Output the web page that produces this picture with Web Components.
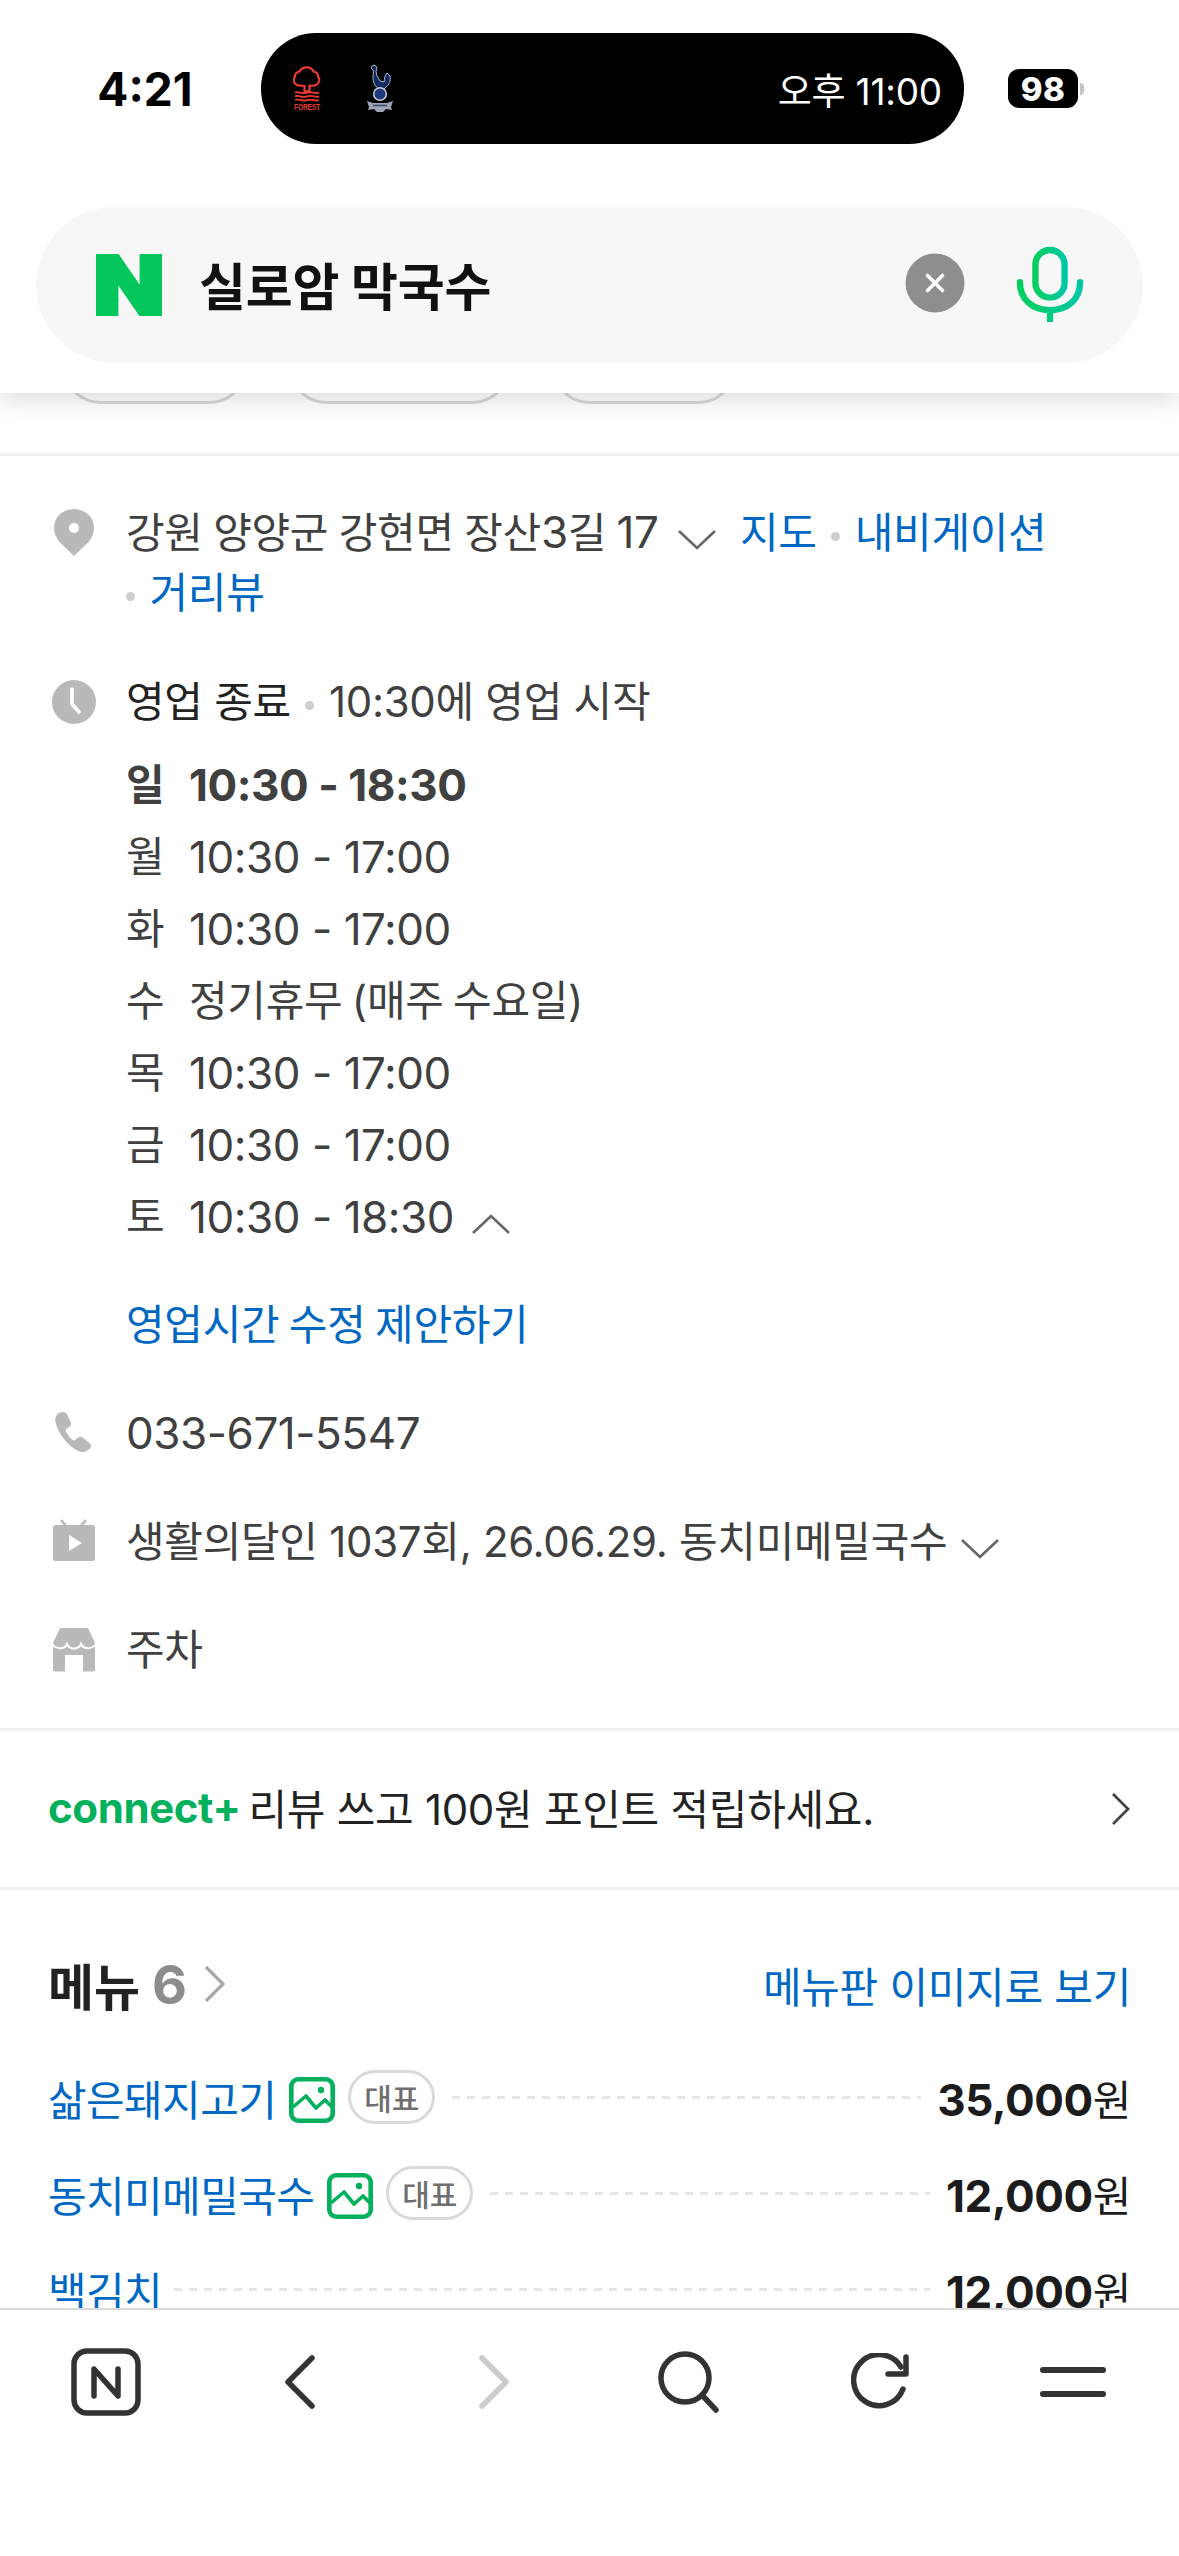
<!DOCTYPE html>
<html lang="ko"><head><meta charset="utf-8"><title>실로암 막국수</title>
<style>
html,body{margin:0;padding:0;background:#fff}
body{width:1179px;height:2556px;overflow:hidden;font-family:"Inter","Noto Sans CJK KR",sans-serif;color:#404040;font-size:42px}
.num{font-size:44px;letter-spacing:-.45px}
.nb{white-space:nowrap}
.ws{word-spacing:-2px}
.ws1{word-spacing:-1px}
</style></head><body>
<app-page>
  <status-bar slot="top"></status-bar>
  <search-bar slot="top" query="실로암 막국수"></search-bar>
  <chip-row></chip-row>
  <hr-line></hr-line>
  <info-list>
    <info-row icon="pin"><span class="ws1">강원 양양군 강현면 장산<span class="num">3</span>길 <span class="num">17</span></span> <ui-chev dir="down" style="margin-left:7px"></ui-chev>&nbsp; <a-link>지도</a-link> <sep-dot></sep-dot> <a-link>내비게이션</a-link> <span class="nb"><sep-dot style="margin-left:0"></sep-dot> <a-link>거리뷰</a-link></span></info-row>
    <info-row icon="clock" style="margin-top:1px">
      <span style="color:#222">영업 종료</span> <sep-dot></sep-dot> 10:30에 영업 시작
      <hours-list slot="after">
        <hour-row day="일" strong><span class="num">10:30 - 18:30</span></hour-row>
        <hour-row day="월"><span class="num">10:30 - 17:00</span></hour-row>
        <hour-row day="화"><span class="num">10:30 - 17:00</span></hour-row>
        <hour-row day="수"><span class="ws">정기휴무 (매주 수요일)</span></hour-row>
        <hour-row day="목"><span class="num">10:30 - 17:00</span></hour-row>
        <hour-row day="금"><span class="num">10:30 - 17:00</span></hour-row>
        <hour-row day="토"><span class="num">10:30 - 18:30</span><ui-chev dir="up" style="margin-left:17px"></ui-chev></hour-row>
      </hours-list>
      <a-link slot="link" class="ws">영업시간 수정 제안하기</a-link>
    </info-row>
    <info-row icon="phone"><span class="num">033-671-5547</span></info-row>
    <info-row icon="tv">생활의달인 1037회, 26.06.29. 동치미메밀국수<ui-chev dir="down" style="margin-left:13px"></ui-chev></info-row>
    <info-row icon="store">주차</info-row>
  </info-list>
  <hr-line></hr-line>
  <connect-banner></connect-banner>
  <hr-line></hr-line>
  <menu-section>
    <menu-row name="삶은돼지고기" price="35,000" photo tag></menu-row>
    <menu-row name="동치미메밀국수" price="12,000" photo tag></menu-row>
    <menu-row name="백김치" price="12,000"></menu-row>
  </menu-section>
  <bottom-nav slot="bottom"></bottom-nav>
</app-page>
<script>
const FONT='"Inter","Noto Sans CJK KR",sans-serif';
customElements.define('app-page',class extends HTMLElement{constructor(){super();this.attachShadow({mode:'open'}).innerHTML=`<style>
:host{display:flex;flex-direction:column;width:1179px;height:2556px;background:#fff;overflow:hidden}
header{flex:none;height:393px;background:#fff;position:relative;z-index:2;box-shadow:0 8px 22px rgba(0,0,0,.13)}
main{flex:1;min-height:0;overflow:hidden}
footer{flex:none}
</style><header><slot name="top"></slot></header><main><slot></slot></main><footer><slot name="bottom"></slot></footer>`}});

customElements.define('status-bar',class extends HTMLElement{constructor(){super();this.attachShadow({mode:'open'}).innerHTML=`<style>
:host{display:flex;align-items:center;height:111px;padding-top:33px;font-family:${FONT}}
.time{width:230px;margin-left:30px;margin-right:1px;text-align:center;font-size:46px;font-weight:700;color:#000;flex:none;line-height:60px}
.isl{width:703px;height:111px;background:#000;border-radius:55px;flex:none;display:flex;align-items:center;padding:0 22px 0 32px;box-sizing:border-box;color:#fff;font-size:37px;letter-spacing:-.2px}
.isl svg{display:block}
.t{margin-left:auto;font-weight:400;white-space:nowrap}
.bat{margin-left:44px;width:70px;height:39px;background:#000;border-radius:11px;color:#fff;font-weight:800;font-size:33px;display:flex;align-items:center;justify-content:center;flex:none;letter-spacing:.5px}
.nub{width:4px;height:12px;background:#c4c4c4;border-radius:0 4px 4px 0;margin-left:2px}
</style>
<div class="time">4:21</div>
<div class="isl">
<svg width="28" height="46" viewBox="0 0 28 50" preserveAspectRatio="none"><path d="M14 1.500c3.500 0 5.500 2 6.500 4.500 3 .5 4.500 3 4.500 5.500 2 2.500 1.500 6.500-1 8.500-2 1.500-4.500 1.500-7 1.500H16.500v6h-5v-6H10c-2.500 0-5 0-7-1.500-2.500-2-3-6-1-8.500 0-2.500 1.500-5 4.500-5.500 1-2.500 3.500-4.500 7.500-4.500z" fill="none" stroke="#ee3b2f" stroke-width="2.200"/><path d="M2 29c4-2 6 2 12 0s8 2 12 0M2 33c4-2 6 2 12 0s8 2 12 0M2 37c4-2 6 2 12 0s8 2 12 0" fill="none" stroke="#ee3b2f" stroke-width="2"/><text x="14" y="47.500" font-size="9" font-weight="700" text-anchor="middle" fill="#ee3b2f" font-family="Liberation Sans" textLength="26" lengthAdjust="spacingAndGlyphs">FOREST</text></svg>
<svg width="26" height="49" viewBox="0 0 26 49" style="margin-left:46px"><path d="M6 1l3 1 1 3-1 2 1 5 3 5 4 1 1-6 2-3 3 3c1 5-1 9-4 11l-3 3-1 0v2h-3v-3c-4-2-6-7-6-12 0-3 1-5 0-7L4 4z" fill="#10295e" stroke="#aab2c6" stroke-width="1"/><circle cx="13" cy="30" r="6.300" fill="#1c3b7c" stroke="#c8cfdd" stroke-width="1.500"/><path d="M0 37l6 2h14l6-2-2 6 1 3-6-1-3 3h-6l-3-3-6 1 1-3z" fill="#9ea5b4"/><path d="M6 41.500h14" stroke="#38486e" stroke-width="1.600"/></svg>
<span class="t">오후 11:00</span></div>
<div class="bat">98</div><div class="nub"></div>`}});

customElements.define('search-bar',class extends HTMLElement{constructor(){super();this.attachShadow({mode:'open'}).innerHTML=`<style>
:host{display:flex;align-items:center;height:156px;margin:63px 36px 0;background:#f7f7f7;border-radius:78px;box-sizing:border-box;padding:0 59px 0 60px;font-family:${FONT}}
.q{margin-left:37px;font-size:51px;font-weight:700;color:#111;flex:1;white-space:nowrap;margin-top:-3px;letter-spacing:-.2px}
svg{display:block;flex:none}
</style>
<svg width="66" height="62" viewBox="0 0 66 62"><path d="M0 0h22.600l21 30.600V0H66v62H43.400L22.400 31.400V62H0z" fill="#03c75a"/></svg>
<span class="q">${this.getAttribute('query')}</span>
<svg width="60" height="60" viewBox="0 0 60 60" style="margin-right:51px;margin-top:-4px"><circle cx="30" cy="30" r="29.500" fill="#8e8e8e"/><path d="M22.500 22.500l15 15m0-15l-15 15" stroke="#fff" stroke-width="3.600" stroke-linecap="round"/></svg>
<svg width="68" height="76" viewBox="0 0 70 76" style="margin-top:-2px"><defs><linearGradient id="m" x1="0" y1="0" x2="1" y2="0"><stop offset="0" stop-color="#03cf5d"/><stop offset="1" stop-color="#00c8a5"/></linearGradient></defs><rect x="20" y="3" width="30" height="49" rx="15" fill="none" stroke="url(#m)" stroke-width="6.500"/><path d="M4 36c0 18 13 29 31 29s31-11 31-29M35 65v11" fill="none" stroke="url(#m)" stroke-width="6.500" stroke-linecap="round"/></svg>`}});

customElements.define('chip-row',class extends HTMLElement{constructor(){super();this.attachShadow({mode:'open'}).innerHTML=`<style>
:host{display:flex;align-items:flex-end;height:11px;overflow:hidden;padding-left:62px;gap:40px;margin-bottom:49px}
i{display:block;flex:none;height:78px;border:3px solid #d8d8d8;border-radius:39px;box-sizing:border-box}
</style><i style="width:186px"></i><i style="width:223px"></i><i style="width:186px"></i>`}});

customElements.define('hr-line',class extends HTMLElement{constructor(){super();this.attachShadow({mode:'open'}).innerHTML=`<style>:host{display:block;height:3px;background:#f0f0f0}</style>`}});

customElements.define('info-list',class extends HTMLElement{constructor(){super();this.attachShadow({mode:'open'}).innerHTML=`<style>
:host{display:flex;flex-direction:column;gap:48px;padding:46px 48px 48px 48px;line-height:60px;letter-spacing:-.3px}
</style><slot></slot>`}});

const ICONS={
pin:'<path d="M22 2C10.500 2 2 10.500 2 21c0 5.500 2.500 10 5.500 14L22 49l14.500-14c3-4 5.500-8.500 5.500-14C42 10.500 33.500 2 22 2z" fill="#b9b9b9"/><circle cx="22" cy="21" r="5" fill="#fff"/>',
clock:'<circle cx="22" cy="22" r="22" fill="#b9b9b9"/><path d="M20 9v15l7 8" fill="none" stroke="#fff" stroke-width="3.600" stroke-linecap="round" stroke-linejoin="round"/>',
phone:'<path d="M5 .5C1.500 2-.5 6 .5 10c2.500 12 13 25 24 29.500 4 1.500 8-.5 10.500-3 1.500-1.500 1.500-3.500 0-5l-7.500-6c-1.500-1-3-1-4.300 0l-2.700 2.300c-1 .8-2.200.8-3.200 0-2.500-2-5-5.300-6.300-8.300-.4-1.200 0-2.300 1-3l2.800-2.200c1.200-1 1.700-2.500 1-4L12 2c-1-2-4.500-2.600-7-1.500z" fill="#b9b9b9" transform="translate(3,2)"/>',
tv:'<path d="M9 1l7.500 8.500M34 1l-7.500 8.500" stroke="#b9b9b9" stroke-width="2.600"/><rect x="1" y="6" width="42" height="36" rx="2.500" fill="#b9b9b9"/><path d="M17 16v16l13-8z" fill="#fff"/>',
store:'<path d="M8 1h28l7 15c0 3-1 5-1 6H2c0-1-1-3-1-6z" fill="#b9b9b9"/><path d="M1 15.500c0 9 14 9 14 0 0 9 14 9 14 0 0 9 14 9 14 0v27a2 2 0 0 1-2 2H31V28H13v16.500H3a2 2 0 0 1-2-2z" fill="#b9b9b9"/><path d="M.5 17c2 5 12 6 14.500 0 2.500 6 11.500 6 14 0 2.500 6 12.500 5 14.500 0" fill="none" stroke="#fff" stroke-width="2"/>'
};
customElements.define('info-row',class extends HTMLElement{constructor(){super();const k=this.getAttribute('icon');this.attachShadow({mode:'open'}).innerHTML=`<style>
:host{display:grid;grid-template-columns:52px 1fr;column-gap:26px}
.ic{height:60px;display:flex;align-items:center;justify-content:center}
svg{display:block;flex:none;overflow:visible}
::slotted([slot=after]){display:block;margin-top:17px}
::slotted([slot=link]){display:block;margin-top:42px}
</style><div class="ic"><svg width="44" height="50" viewBox="0 0 44 ${k==='clock'?44:k==='pin'?50:46}">${ICONS[k]}</svg></div>
<div class="body"><slot></slot><slot name="after"></slot><slot name="link"></slot></div>`}});

customElements.define('a-link',class extends HTMLElement{constructor(){super();this.attachShadow({mode:'open'}).innerHTML=`<style>:host{color:#0068c3}</style><slot></slot>`}});
customElements.define('sep-dot',class extends HTMLElement{constructor(){super();this.attachShadow({mode:'open'}).innerHTML=`<style>:host{display:inline-block;width:9px;height:9px;border-radius:50%;background:#cfcfcf;vertical-align:middle;margin:0 3px}</style>`}});
customElements.define('ui-chev',class extends HTMLElement{constructor(){super();const d=this.getAttribute('dir');const p={down:'M2 2l18 17L38 2',up:'M2 19L20 2l18 17'}[d];this.attachShadow({mode:'open'}).innerHTML=`<style>:host{display:inline-block;vertical-align:-2px;margin-left:6px}svg{display:block}</style><svg width="40" height="21" viewBox="0 0 40 21"><path d="${p}" fill="none" stroke="#666" stroke-width="2.600"/></svg>`}});

customElements.define('hours-list',class extends HTMLElement{constructor(){super();this.attachShadow({mode:'open'}).innerHTML=`<style>:host{display:block}</style><slot></slot>`}});
customElements.define('hour-row',class extends HTMLElement{constructor(){super();const st=this.hasAttribute('strong');this.attachShadow({mode:'open'}).innerHTML=`<style>
:host{display:flex;align-items:center;height:72px;${st?'font-weight:700;':''}white-space:pre}
.d{width:63px;flex:none}
</style><span class="d">${this.getAttribute('day')}</span><span><slot></slot></span>`}});

customElements.define('connect-banner',class extends HTMLElement{constructor(){super();this.attachShadow({mode:'open'}).innerHTML=`<style>
:host{display:flex;align-items:center;height:156px;padding:0 48px 3px;box-sizing:border-box;color:#222;font-size:42px;letter-spacing:-.3px}
b{color:#03b05c;font-weight:700;font-size:42px;letter-spacing:-.4px;margin-right:8px;white-space:nowrap}
span{flex:1;white-space:nowrap;margin-top:-2px}svg{display:block;margin-top:3px}
</style><b>connect+</b><span>리뷰 쓰고 100원 포인트 적립하세요.</span>
<svg width="20" height="34" viewBox="0 0 20 34"><path d="M2 2l15 15L2 32" fill="none" stroke="#444" stroke-width="2.800"/></svg>`}});

customElements.define('menu-section',class extends HTMLElement{constructor(){super();this.attachShadow({mode:'open'}).innerHTML=`<style>
:host{display:block;padding:64px 48px 0}
.h{display:flex;align-items:center;height:60px;margin-bottom:35px}
.t{font-size:50px;font-weight:700;color:#222}
.n{font-size:54px;font-weight:700;color:#8c8c8c;margin-left:12px}
svg{display:block;margin-left:17px}
a{margin-left:auto;color:#0068c3;font-size:42px;letter-spacing:-.3px}
</style><div class="h"><span class="t">메뉴</span><span class="n">6</span><svg width="22" height="38" viewBox="0 0 22 38"><path d="M2 2l17 17L2 36" fill="none" stroke="#a8a8a8" stroke-width="3.200"/></svg><a>메뉴판 이미지로 보기</a></div><slot></slot>`}});

customElements.define('menu-row',class extends HTMLElement{constructor(){super();const ph=this.hasAttribute('photo'),tg=this.hasAttribute('tag');this.attachShadow({mode:'open'}).innerHTML=`<style>
:host{display:flex;align-items:center;height:96px;letter-spacing:-.6px;font-size:42px}
.n{color:#0068c3;white-space:nowrap}
svg{display:block;flex:none;margin-left:13px;margin-top:6px}
.tag{flex:none;margin-left:13px;height:54px;width:87px;box-sizing:border-box;border:3px solid #d9d9d9;border-radius:27px;display:flex;align-items:center;justify-content:center;font-size:30px;font-weight:500;color:#6f6f6f;letter-spacing:0}
.dots{flex:1;min-width:0;margin:0 16px 0 ${tg?17:12}px;height:3px;background:repeating-linear-gradient(90deg,#e6e6e6 0 8px,transparent 8px 15px)}
.p{color:#1c1c1c;font-weight:700;font-size:44px;white-space:nowrap;letter-spacing:-.4px}
.p span{font-weight:400;font-size:42px}
</style><span class="n">${this.getAttribute('name')}</span>
${ph?`<svg width="46" height="46" viewBox="0 0 46 46"><rect x="2.300" y="2.300" width="41.400" height="41.400" rx="7" fill="none" stroke="#03b05c" stroke-width="4.600"/><circle cx="32" cy="13" r="3.200" fill="#03b05c"/><path d="M4 30L17 19 27 31 36 23 43 30" fill="none" stroke="#03b05c" stroke-width="3.600" stroke-linejoin="round"/></svg>`:''}
${tg?`<span class="tag">대표</span>`:''}
<span class="dots"></span><span class="p">${this.getAttribute('price')}<span>원</span></span>`}});

customElements.define('bottom-nav',class extends HTMLElement{constructor(){super();this.attachShadow({mode:'open'}).innerHTML=`<style>
:host{display:block;height:248px;border-top:2px solid #d9d9d9;box-sizing:border-box;background:#fff}
.r{display:flex;align-items:center;height:144px;padding-left:71px}
svg{display:block;flex:none}
</style><div class="r">
<svg width="70" height="68" viewBox="0 0 70 68"><rect x="3" y="3" width="64" height="62" rx="13" fill="none" stroke="#333" stroke-width="5.500"/><path d="M23 48V21l24 27V21" fill="none" stroke="#333" stroke-width="5.500" stroke-linejoin="round" stroke-linecap="round"/></svg>
<svg width="32" height="54" viewBox="0 0 32 54" style="margin-left:143px"><path d="M28 3L4 27l24 24" fill="none" stroke="#333" stroke-width="5.500" stroke-linecap="round" stroke-linejoin="round"/></svg>
<svg width="32" height="54" viewBox="0 0 32 54" style="margin-left:162px"><path d="M4 3l24 24L4 51" fill="none" stroke="#ccc" stroke-width="5.500" stroke-linecap="round" stroke-linejoin="round"/></svg>
<svg width="62" height="62" viewBox="0 0 62 62" style="margin-left:148px"><circle cx="27" cy="27" r="24" fill="none" stroke="#333" stroke-width="5.500"/><path d="M44 44l14 15" stroke="#333" stroke-width="5.500" stroke-linecap="round"/></svg>
<svg width="58" height="58" viewBox="0 0 58 58" style="margin-left:131px"><path d="M52 36A25.500 25.500 0 1 1 50 14" fill="none" stroke="#333" stroke-width="5.500" stroke-linecap="round"/><path d="M55 4V21H37" fill="none" stroke="#333" stroke-width="5.500" stroke-linejoin="round" stroke-linecap="round"/></svg>
<svg width="68" height="30" viewBox="0 0 68 30" style="margin-left:130px"><path d="M4 3h60M4 27h60" stroke="#333" stroke-width="6" stroke-linecap="round"/></svg>
</div>`}});
</script>
</body></html>
